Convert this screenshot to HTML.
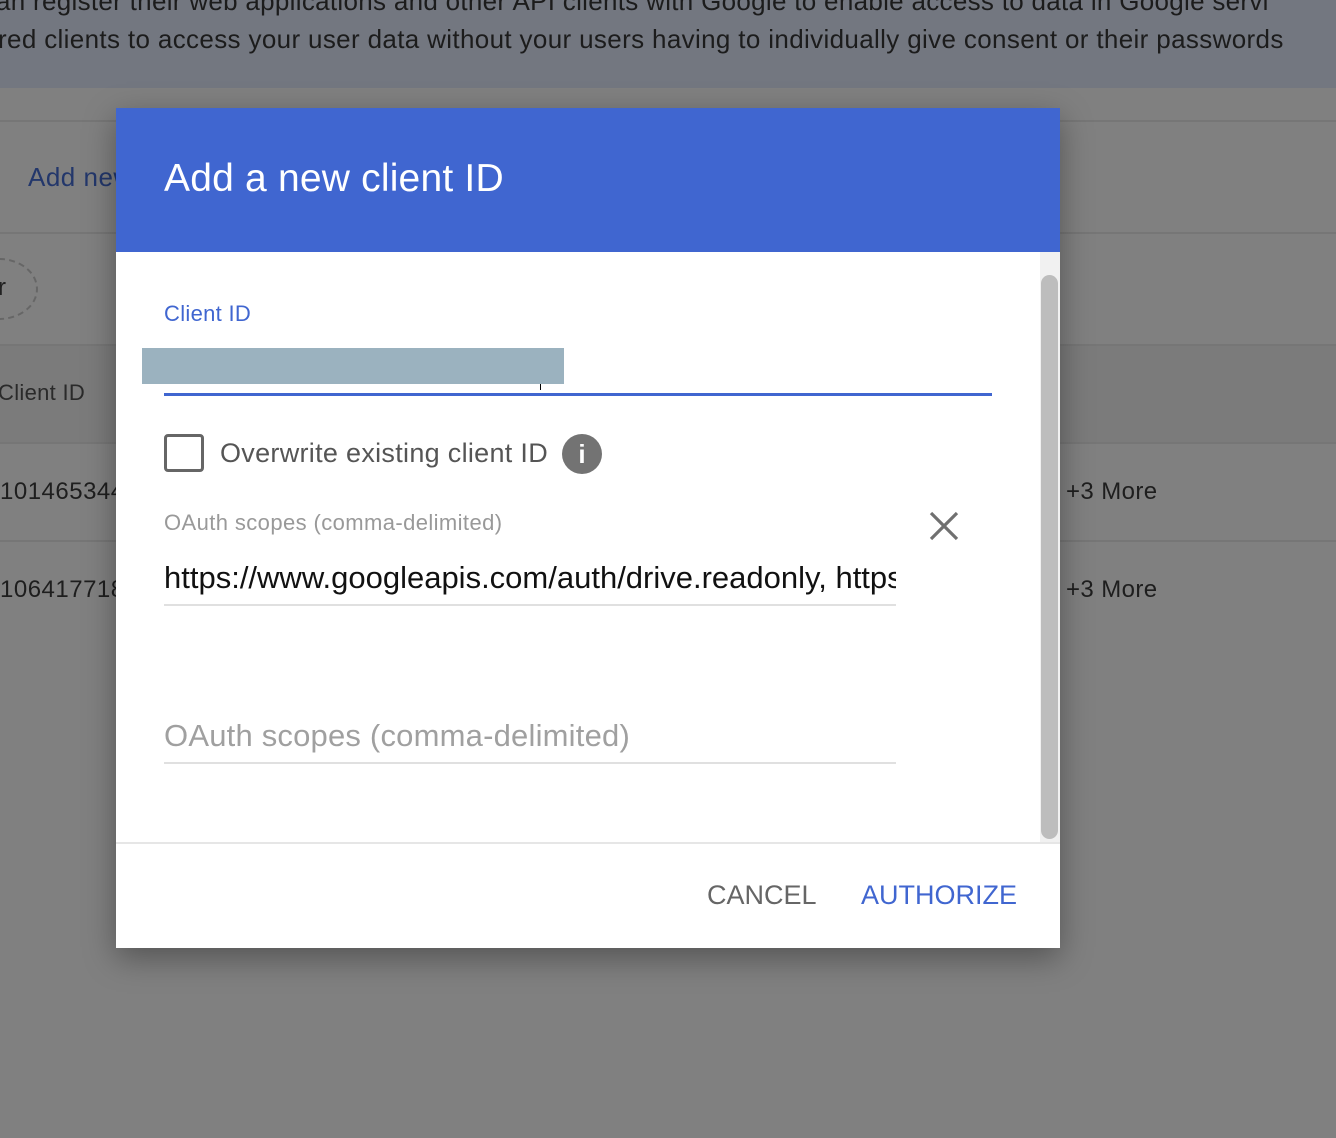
<!DOCTYPE html>
<html><head><meta charset="utf-8"><style>
*{margin:0;padding:0;box-sizing:border-box}
body{width:1336px;height:1138px;overflow:hidden;background:#808080;font-family:"Liberation Sans",Arial,sans-serif;position:relative}
.a{position:absolute}
.hl{position:absolute;left:0;width:1336px;height:2px;background:#767676}
</style></head><body>
<div class="a" style="left:0;top:0;width:1336px;height:88px;background:#737780"></div>
<div class="a" style="left:-4px;top:-14px;font-size:26px;letter-spacing:0.3px;color:#1c1c1c;white-space:nowrap">an register their web applications and other API clients with Google to enable access to data in Google servi</div>
<div class="a" style="left:-2px;top:24px;font-size:26px;letter-spacing:0.35px;color:#1c1c1c;white-space:nowrap">red clients to access your user data without your users having to individually give consent or their passwords</div>
<div class="hl" style="top:120px"></div>
<div class="hl" style="top:232px"></div>
<div class="hl" style="top:344px"></div>
<div class="a" style="left:0;top:346px;width:1336px;height:96px;background:#7b7b7b"></div>
<div class="hl" style="top:442px"></div>
<div class="hl" style="top:540px"></div>
<div class="a" style="left:28px;top:162px;font-size:26px;letter-spacing:0.5px;color:#23376b">Add new</div>
<div class="a" style="left:-40px;top:258px;width:78px;height:62px;border:2px dashed #666;border-radius:50%"></div>
<div class="a" style="left:-2px;top:274px;font-size:24px;color:#222">r</div>
<div class="a" style="left:-2px;top:380px;font-size:22px;letter-spacing:0.3px;color:#2a2a2a">Client ID</div>
<div class="a" style="left:0;top:478px;font-size:24px;letter-spacing:0.5px;color:#1e1e1e">101465344</div>
<div class="a" style="left:0;top:576px;font-size:24px;letter-spacing:0.5px;color:#1e1e1e">106417718</div>
<div class="a" style="left:1066px;top:478px;font-size:24px;letter-spacing:0.4px;color:#1e1e1e">+3 More</div>
<div class="a" style="left:1066px;top:576px;font-size:24px;letter-spacing:0.4px;color:#1e1e1e">+3 More</div>

<div class="a" style="left:116px;top:108px;width:944px;height:840px;background:#fff;box-shadow:0 10px 30px rgba(0,0,0,.35)">
  <div class="a" style="left:0;top:0;width:944px;height:144px;background:#4066d0"></div>
  <div class="a" style="left:48px;top:49px;font-size:39px;letter-spacing:0.2px;color:#fff">Add a new client ID</div>
  <div class="a" style="left:924px;top:144px;width:20px;height:591px;background:#f1f1f1"></div>
  <div class="a" style="left:925px;top:167px;width:17px;height:564px;background:#bdbdbd;border-radius:9px"></div>
  <div class="a" style="left:48px;top:193px;font-size:22px;letter-spacing:0.3px;color:#4066d0">Client ID</div>
  <div class="a" style="left:26px;top:240px;width:422px;height:36px;background:#9bb2bf"></div>
  <div class="a" style="left:424px;top:276px;width:1px;height:6px;background:#000"></div>
  <div class="a" style="left:48px;top:285px;width:828px;height:3px;background:#4066d0"></div>
  <div class="a" style="left:48px;top:326px;width:40px;height:38px;border:3px solid #666;border-radius:4px"></div>
  <div class="a" style="left:104px;top:330px;font-size:27px;letter-spacing:0.3px;color:#555">Overwrite existing client ID</div>
  <div class="a" style="left:446px;top:326px;width:40px;height:40px;border-radius:50%;background:#737373;color:#fff;font-size:26px;font-weight:bold;text-align:center;line-height:40px">i</div>
  <div class="a" style="left:48px;top:402px;font-size:22px;letter-spacing:0.4px;color:#999">OAuth scopes (comma-delimited)</div>
  <svg class="a" style="left:812px;top:402px" width="32" height="32" viewBox="0 0 32 32"><path d="M3 3L29 29M29 3L3 29" stroke="#707070" stroke-width="3.2"/></svg>
  <div class="a" style="left:48px;top:452px;width:732px;overflow:hidden;white-space:nowrap;font-size:31px;color:#111">https://www.googleapis.com/auth/drive.readonly, https</div>
  <div class="a" style="left:48px;top:496px;width:732px;height:2px;background:#e0e0e0"></div>
  <div class="a" style="left:48px;top:610px;font-size:31px;letter-spacing:0.2px;color:#a0a0a0">OAuth scopes (comma-delimited)</div>
  <div class="a" style="left:48px;top:654px;width:732px;height:2px;background:#e0e0e0"></div>
  <div class="a" style="left:0;top:734px;width:944px;height:2px;background:#e6e6e6"></div>
  <div class="a" style="left:591px;top:772px;font-size:27px;color:#666">CANCEL</div>
  <div class="a" style="left:745px;top:772px;font-size:27px;color:#4066d0">AUTHORIZE</div>
</div>
</body></html>
